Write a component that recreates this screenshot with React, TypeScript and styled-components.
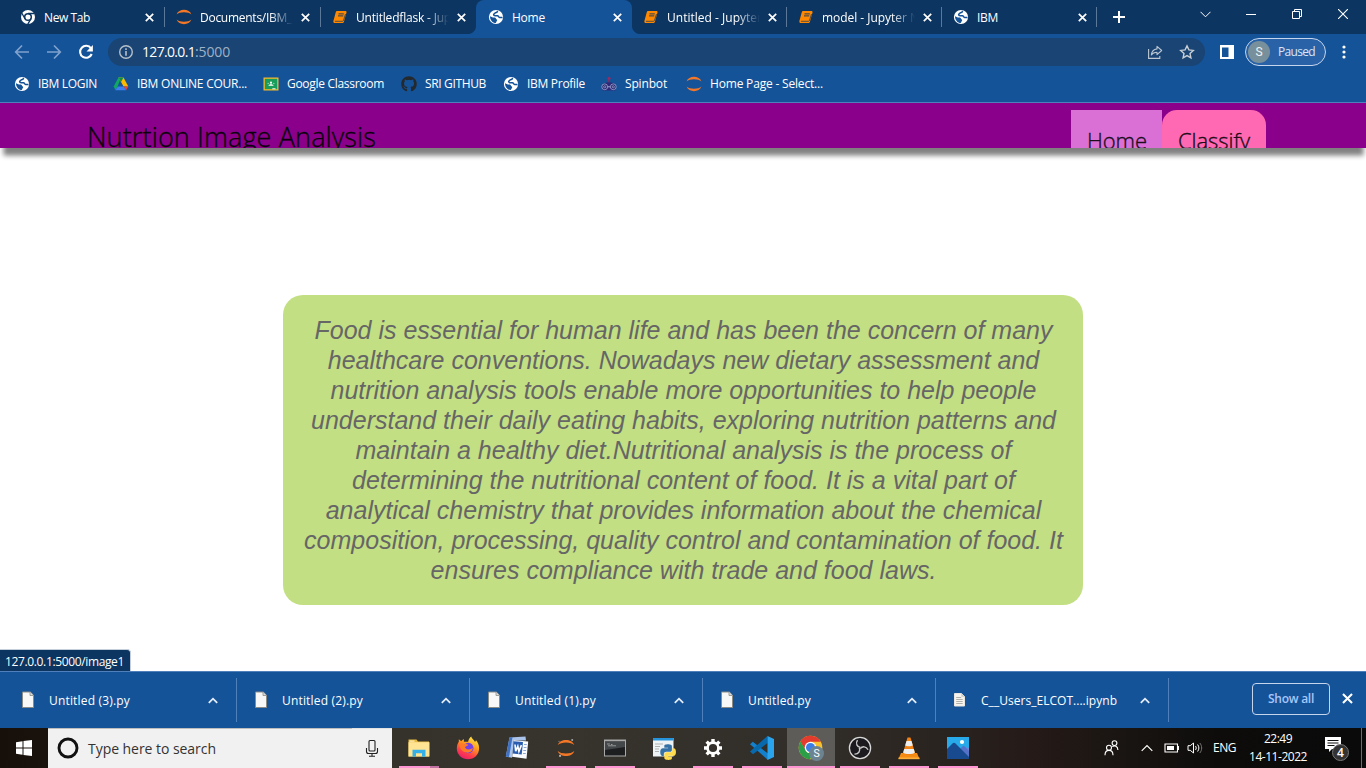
import React, { useLayoutEffect, useRef, useState } from 'react';
import styled, { createGlobalStyle, css } from 'styled-components';
import { FaGithub } from 'react-icons/fa';

const GlobalStyle = createGlobalStyle`
  * { box-sizing: border-box; }
  html, body { margin: 0; padding: 0; }
  body { background: #fff; overflow: hidden; }
`;

const ui = '"Open Sans", "Noto Sans", sans-serif';

/* ---------- text that is tracked to an exact width ---------- */

const TextSpan = styled.span<{ $size: number; $color: string; $weight: number }>`
  display: inline-block;
  flex: none;
  font-family: ${ui};
  font-size: ${p => p.$size}px;
  font-weight: ${p => p.$weight};
  color: ${p => p.$color};
  white-space: pre;
  ${p => p.$weight < 400 && css`-webkit-text-stroke: 0.35px ${p.$color};`}
`;

type FitProps = {
  children: React.ReactNode;
  width: number;
  size?: number;
  color?: string;
  weight?: number;
};

function Fit({ children, width, size = 12, color = '#fff', weight = 400 }: FitProps) {
  const ref = useRef<HTMLSpanElement>(null);
  const [tracking, setTracking] = useState(0);
  useLayoutEffect(() => {
    const el = ref.current;
    if (!el) return;
    const count = (el.textContent || '').length;
    el.style.letterSpacing = '0px';
    const next = (width - el.getBoundingClientRect().width) / count;
    el.style.letterSpacing = `${next}px`;
    setTracking(next);
  }, [width, size, weight]);
  return (
    <TextSpan ref={ref} $size={size} $color={color} $weight={weight} style={{ letterSpacing: tracking }}>
      {children}
    </TextSpan>
  );
}

/* ---------- frame ---------- */

const Screen = styled.div`
  width: 1366px;
  height: 768px;
  display: flex;
  flex-direction: column;
  overflow: hidden;
  background: #fff;
  font-family: ${ui};
  svg { display: block; flex: none; }
`;

/* ---------- tab strip ---------- */

const TabStrip = styled.div`
  height: 34px;
  flex: none;
  display: flex;
  padding-left: 8px;
  background: #0c3561;
`;

const TabBox = styled.div<{ $width: number; $active?: boolean; $divider?: boolean }>`
  position: relative;
  width: ${p => p.$width}px;
  height: 34px;
  flex: none;
  display: flex;
  align-items: center;
  padding: 0 0 0 12px;
  ${p => p.$active && css`
    margin-right: -1px;
    z-index: 1;
    background: #155399;
    border-radius: 8px 8px 0 0;
    &::before, &::after {
      content: '';
      position: absolute;
      bottom: 0;
      width: 8px;
      height: 8px;
    }
    &::before { left: -8px; background: radial-gradient(circle at 0 0, #0c3561 7.5px, #155399 8.5px); }
    &::after { right: -8px; background: radial-gradient(circle at 100% 0, #0c3561 7.5px, #155399 8.5px); }
  `}
  ${p => p.$divider && css`
    background: linear-gradient(#5b7898, #5b7898) 0 7px / 1px 20px no-repeat;
  `}
`;

const TabTitle = styled.div<{ $fade?: boolean }>`
  width: 93px;
  margin-left: 8px;
  overflow: hidden;
  line-height: 18px;
  ${p => p.$fade && css`
    mask-image: linear-gradient(90deg, #000 75%, transparent 100%);
  `}
`;

const TabClose = styled.div`
  width: 16px;
  margin-left: 4px;
  display: flex;
  justify-content: center;
`;

const NewTab = styled.div`
  width: 46px;
  display: flex;
  align-items: center;
  justify-content: center;
  background: linear-gradient(#5b7898, #5b7898) 0 7px / 1px 20px no-repeat;
`;

const WindowButtons = styled.div`
  margin-left: auto;
  height: 28px;
  display: flex;
`;

const WindowButton = styled.div`
  width: 46px;
  display: flex;
  align-items: center;
  justify-content: center;
`;

/* ---------- toolbar ---------- */

const Toolbar = styled.div`
  height: 36px;
  flex: none;
  display: flex;
  align-items: center;
  background: #155399;
`;

const NavButtons = styled.div`
  width: 108px;
  display: flex;
  gap: 16px;
  padding-left: 14px;
`;

const AddressBar = styled.div`
  width: 1097px;
  height: 28px;
  display: flex;
  align-items: center;
  padding: 0 10px;
  border-radius: 14px;
  background: #194473;
`;

const Url = styled.div`
  margin-left: 8px;
  flex: 1;
  display: flex;
  line-height: 20px;
`;

const AddressActions = styled.div`
  display: flex;
  gap: 16px;
`;

const SideButton = styled.div`
  width: 40px;
  display: flex;
  justify-content: center;
  padding-left: 3px;
`;

const ProfilePill = styled.div`
  width: 81px;
  height: 28px;
  display: flex;
  align-items: center;
  padding-left: 2px;
  border: 1px solid #c5d6ec;
  border-radius: 14px;
  background: #2a62a8;
  line-height: 18px;
`;

const Avatar = styled.div`
  width: 22px;
  height: 22px;
  margin-right: 8px;
  display: flex;
  align-items: center;
  justify-content: center;
  border-radius: 50%;
  background: #78909c;
  color: #eef2f4;
  font: 12px Roboto, sans-serif;
`;

const MenuButton = styled.div`
  width: 36px;
  display: flex;
  justify-content: center;
`;

const Bookmarks = styled.div`
  height: 33px;
  flex: none;
  display: flex;
  align-items: center;
  padding: 0 0 5px 14px;
  background: #155399;
  border-bottom: 1px solid #4f80bb;
`;

const Bookmark = styled.div<{ $width: number }>`
  width: ${p => p.$width}px;
  flex: none;
  display: flex;
  align-items: center;
  gap: 8px;
  line-height: 18px;
`;

/* ---------- page ---------- */

const Page = styled.main`
  position: relative;
  height: 568px;
  flex: none;
  background: #fff;
  overflow: hidden;
`;

const Header = styled.header`
  height: 45px;
  background: #8b008b;
  box-shadow: 0 10px 5px -2.5px #808080;
`;

const HeaderInner = styled.div`
  height: 45px;
  overflow: hidden;
  display: flex;
  justify-content: space-between;
  padding: 7px 100px 0 87px;
`;

const Brand = styled.div`
  padding-top: 8px;
  line-height: 38px;
`;

const Nav = styled.nav`
  display: flex;
`;

const NavLink = styled.div<{ $width: number; $tone: string; $round?: boolean }>`
  width: ${p => p.$width}px;
  height: 60px;
  padding: 15px 0 0 16px;
  line-height: 30px;
  background: ${p => p.$tone};
  border-radius: ${p => (p.$round ? '15px' : '0')};
`;

const Card = styled.section`
  width: 800px;
  height: 310px;
  margin: 147px auto 0;
  padding: 20px 19px 20px 20px;
  border-radius: 20px;
  background: #c3df83;
  color: #666;
  font: italic 25px/30px "Liberation Sans", Arial, sans-serif;
  text-align: center;
  white-space: nowrap;
`;

const StatusBubble = styled.div`
  position: absolute;
  left: 0;
  bottom: 0;
  width: 131px;
  height: 22px;
  padding-left: 5px;
  line-height: 20px;
  background: #0c3561;
  border-radius: 0 4px 0 0;
  border-top: 1px solid #c5cfdb;
  border-right: 1px solid #c5cfdb;
`;

/* ---------- downloads ---------- */

const Downloads = styled.div`
  height: 57px;
  flex: none;
  display: flex;
  align-items: center;
  background: #155399;
  border-top: 1px solid #4f80bb;
`;

const Download = styled.div<{ $first?: boolean }>`
  width: ${p => (p.$first ? 237 : 233)}px;
  height: 44px;
  display: flex;
  align-items: center;
  padding: 0 18px 0 ${p => (p.$first ? 20 : 16)}px;
  border-right: 1px solid #4f80bb;
  line-height: 18px;
`;

const DownloadName = styled.div`
  flex: 1;
  margin: -1px 0 0 13px;
`;

const DownloadEnd = styled.div`
  margin-left: auto;
  padding: 0 13px 3px 0;
  display: flex;
  align-items: center;
  gap: 12px;
`;

const ShowAll = styled.div`
  width: 78px;
  height: 32px;
  display: flex;
  align-items: center;
  justify-content: center;
  border: 1px solid #c5d6ec;
  border-radius: 4px;
`;

/* ---------- taskbar ---------- */

const Taskbar = styled.div`
  height: 40px;
  flex: none;
  display: flex;
  background: linear-gradient(90deg, #17100a 0, #1a130d 48px, #35322c 392px, #37342e 560px, #312d28 820px, #28221e 960px, #251a17 1030px, #1b1613 1110px, #0d0c0b 1220px, #0a0a0a 1366px);
`;

const StartButton = styled.div`
  width: 48px;
  display: flex;
  align-items: center;
  justify-content: center;
`;

const SearchBox = styled.div`
  width: 344px;
  display: flex;
  align-items: center;
  padding: 0 12px 0 9px;
  background: linear-gradient(90deg, #bdbdbd 304px, #e2e2e2 304px) 0 0 / 100% 1px no-repeat #f1f1f1;
`;

const SearchLabel = styled.div`
  flex: 1;
  margin-left: 9px;
  line-height: 22px;
`;

const Apps = styled.div`
  display: flex;
  gap: 1px;
  margin-left: 3px;
`;

const AppButton = styled.div<{ $line?: 'short' | 'full' | 'split' }>`
  width: 48px;
  height: 40px;
  display: flex;
  align-items: center;
  justify-content: center;
  ${p => p.$line === 'short' && css`
    background: linear-gradient(#ff94d3, #ff94d3) 4px 38px / 40px 2px no-repeat;
  `}
  ${p => p.$line === 'full' && css`
    background: linear-gradient(#ff94d3, #ff94d3) 0 38px / 48px 2px no-repeat #5e5c58;
  `}
  ${p => p.$line === 'split' && css`
    background: linear-gradient(90deg, #ff94d3 31px, #c272a2 31px) 4px 38px / 40px 2px no-repeat;
  `}
`;

const Tray = styled.div`
  margin-left: auto;
  display: flex;
  align-items: center;
`;

const TraySlot = styled.div<{ $width: number }>`
  width: ${p => p.$width}px;
  display: flex;
  align-items: center;
  justify-content: center;
  line-height: 18px;
`;

const Clock = styled.div`
  width: 66px;
  display: flex;
  flex-direction: column;
  align-items: center;
  line-height: 18px;
  margin: -1px 0 0 2px;
`;

const NoticeSlot = styled.div`
  width: 50px;
  display: flex;
  justify-content: center;
  padding: 4px 0 0 2px;
`;

const ShowDesktop = styled.div`
  width: 5px;
  height: 40px;
  border-left: 1px solid #6b6b6b;
`;

/* ---------- icons ---------- */

const Cross = ({ size = 9, w = 1.7 }: { size?: number; w?: number }) => (
  <svg width={size} height={size} viewBox="0 0 9 9"><path d="M.8.8l7.4 7.4M8.2.8L.8 8.2" stroke="#fff" strokeWidth={w} fill="none" /></svg>
);

const Globe = () => (
  <svg width="16" height="16" viewBox="0 0 16 16">
    <circle cx="8" cy="8" r="7.1" fill="#fff" />
    <path d="M9.6 1.900c-.2 1.500-.9 1.900-2.300 1.900-.5.900-1.700.7-1.700 1.800 0 .8.700 1.100 1.500 1.100h2.400c1.100.1 1 1.600 2 1.700h3" fill="none" stroke="#155399" strokeWidth="1.500" />
    <path d="M2 7.300l2.900 1.300h2c1.200.3.900 1.800 2.200 2.100.5 1-.8 1.500-1.300 3.400C4.500 14 2 11.200 2 7.300z" fill="#155399" />
  </svg>
);

const ChromeMono = () => (
  <svg width="16" height="16" viewBox="0 0 16 16">
    <circle cx="8" cy="8" r="7" fill="#fff" />
    <circle cx="8" cy="8" r="3.3" fill="#fff" stroke="#0c3561" strokeWidth="1.5" />
    <path d="M8 4.500h6.400M5 9.700L1.900 4.300M11 9.700L7.800 15.100" stroke="#0c3561" strokeWidth="1.300" />
  </svg>
);

const Jupyter = ({ size = 16, dots = false }: { size?: number; dots?: boolean }) => (
  <svg width={size} height={size} viewBox="0 0 16 16">
    <path d="M.6 5.400C2.500-.7 13.500-.7 15.400 5.400 12.500 2.400 3.500 2.400.6 5.400zM.6 10.600c1.900 6.100 12.900 6.100 14.800 0-2.900 3-11.900 3-14.800 0z" fill="#f37726" />
    {dots && <g fill="#aaa"><circle cx="13.500" cy="0.900" r=".9" /><circle cx="2.700" cy="15" r="1" /><circle cx="1.800" cy="2" r=".5" /></g>}
  </svg>
);

const Book = () => (
  <svg width="16" height="16" viewBox="0 0 16 16">
    <path d="M5.400 2h7.900c1 0 1.500.7 1.200 1.600l-2.600 9.100c-.2.800-.8 1.300-1.700 1.300H3c-1.300 0-1.900-.9-1.600-2.100L3.700 3.400C4 2.500 4.500 2 5.400 2z" fill="#ff8800" />
    <path d="M6.500 4.900h5.300M6 6.900h5.300" stroke="#0c3561" strokeWidth=".9" />
    <path d="M2.900 12.300h7.500c.6 0 .9-.3 1.100-.9L13.500 5" stroke="#0c3561" strokeWidth=".7" fill="none" />
  </svg>
);

const Arrow = ({ flip }: { flip?: boolean }) => (
  <svg width="16" height="16" viewBox="0 0 16 16">
    <path d={flip ? 'M1 8h13M8 1.500L14.300 8 8 14.500' : 'M15 8H2M8 1.500L1.700 8 8 14.500'} fill="none" stroke="#7fa2cd" strokeWidth="1.700" />
  </svg>
);

const Reload = () => (
  <svg width="16" height="16" viewBox="0 0 16 16">
    <path d="M13 4.300A6 6 0 1 0 13.700 10" fill="none" stroke="#fff" strokeWidth="2.100" />
    <path d="M14.900.9v6.500H8.500z" fill="#fff" />
  </svg>
);

const Info = () => (
  <svg width="16" height="16" viewBox="0 0 16 16">
    <circle cx="8" cy="8" r="6.300" fill="none" stroke="#b7c0ca" strokeWidth="1.400" />
    <path d="M8 7v4.800M8 4.200v1.700" stroke="#b7c0ca" strokeWidth="1.600" />
  </svg>
);

const Share = () => (
  <svg width="16" height="16" viewBox="0 0 16 16" fill="none" stroke="#bcc7d3" strokeWidth="1.100">
    <path d="M1.600 5v9.400h11.200V12" />
    <path d="M10 2.300l4.700 4.200L10 10.600V8.200c-2.800 0-4.500.8-5.700 2.800.4-3.400 2.300-5.700 5.700-6.100z" strokeLinejoin="round" />
  </svg>
);

const Star = () => (
  <svg width="16" height="16" viewBox="0 0 16 16">
    <path d="M8 1.900l1.900 4 4.400.5-3.300 3 .9 4.400L8 11.600l-3.900 2.200.9-4.400-3.300-3 4.400-.5z" fill="none" stroke="#c8cfd6" strokeWidth="1.400" />
  </svg>
);

const Drive = () => (
  <svg width="16" height="16" viewBox="0 0 16 16">
    <path d="M5.500 1.500h2.600L4.400 10.800 2.200 13.900.8 10.200z" fill="#11a861" />
    <path d="M5.500 1.500h5l4.800 8.900h-4.700z" fill="#ffba00" />
    <path d="M5.500 1.500h5L8 6z" fill="#0f8c4a" />
    <path d="M4.600 10.400h6.200l2.300 3.800H2.400z" fill="#3d7ff1" />
    <path d="M10.800 10.400h4.500l-2.200 3.800z" fill="#ea4335" />
  </svg>
);

const Classroom = () => (
  <svg width="16" height="16" viewBox="0 0 16 16">
    <path d="M.5 1.500h15v13H.5z" fill="#f6b92b" />
    <path d="M1.800 2.800h12.400v10.400H1.800z" fill="#189d5b" />
    <g fill="#fff"><circle cx="8" cy="6.700" r="1.100" /><path d="M5.500 9.700c0-2 5-2 5 0z" /></g>
    <g fill="#8bd1ab"><circle cx="5.200" cy="7.500" r=".8" /><circle cx="10.800" cy="7.500" r=".8" /></g>
    <path d="M9.300 12.300h3.200v1H9.300z" fill="#fff" />
  </svg>
);

const Spinbot = () => (
  <svg width="16" height="16" viewBox="0 0 16 16">
    <path d="M7.800 7V3.500" stroke="#8d2a62" strokeWidth="1" />
    <path d="M8 .5L9.800 2.200 8 4.700 6.300 2.600z" fill="#9c2a60" />
    <path d="M1.600 9C3 5.200 13 5.200 14.400 9v5.500H1.600z" fill="#2e2a78" />
    <g fill="#24256b" stroke="#a3a9d6" strokeWidth=".8"><circle cx="3.700" cy="10.800" r="2.900" /><circle cx="12.300" cy="10.800" r="2.900" /></g>
    <g fill="none" stroke="#9da2d0" strokeWidth=".8"><circle cx="3.700" cy="10.800" r="1.100" /><circle cx="12.300" cy="10.800" r="1.100" /></g>
    <path d="M6.700 10.800h2.600" stroke="#a3a9d6" strokeWidth="1" />
  </svg>
);

const FileIcon = () => (
  <svg width="16" height="18" viewBox="0 0 16 18">
    <path d="M2.500 1h7.800l3.200 3.200V16.500h-11z" fill="#f8f8f8" stroke="#8b8b86" strokeWidth="1" />
    <path d="M10 1v3.500h3.500" fill="#ddd" stroke="#8b8b86" strokeWidth=".8" />
  </svg>
);

const NotebookFile = () => (
  <svg width="16" height="18" viewBox="0 0 16 18">
    <path d="M2.500 2.500h7l3 3v9.500h-10z" fill="#f5f4ef" stroke="#e8e6df" />
    <path d="M9.300 2.300v3.400h3.400" fill="#cfcdc4" />
    <path d="M4.200 6.500h5M4.200 8.500h6.500M4.200 10.500h6.500M4.200 12.500h6.500" stroke="#aaa9a0" strokeWidth=".9" />
  </svg>
);

const ChevronUp = () => (
  <svg width="10" height="7" viewBox="0 0 10 7"><path d="M.8 5.900L5 1.700l4.200 4.200" fill="none" stroke="#e4edf8" strokeWidth="1.800" /></svg>
);

const Explorer = () => (
  <svg width="24" height="24" viewBox="0 0 24 24">
    <path d="M1.500 3.500h8l1.500 2h11v15h-20.500z" fill="#e8b93f" />
    <path d="M1.500 6.200h21v14.300h-21z" fill="#ffe493" />
    <path d="M2.500 4.500h5v1.200h-5z" fill="#fff3c2" />
    <path d="M5.500 20.800v-7h13v7h-3.500v-3.500H9v3.500z" fill="#36b0e8" />
  </svg>
);

const Firefox = () => (
  <svg width="24" height="24" viewBox="0 0 24 24">
    <defs>
      <linearGradient id="ff" x1=".8" y1="0" x2=".3" y2="1"><stop offset="0" stopColor="#fff04a" /><stop offset=".4" stopColor="#ff9a1f" /><stop offset=".75" stopColor="#ff3b4b" /><stop offset="1" stopColor="#e5206f" /></linearGradient>
    </defs>
    <path d="M15.200.5c.4 2.400 3 3.200 3.700 5.300 1-.4 1-1.200 1-1.800 2.200 2.400 3.200 5.400 3.200 8.200 0 6.500-5 11-11.100 11S.8 18.500.8 12.400c0-3 1-5.200 2-6.700V3.300l2.500 2c.7-.9 1.500-1.700 2.600-2v2.500h4.200c.4-2.200 1.500-4 3.100-5.300z" fill="url(#ff)" />
    <circle cx="12.300" cy="12" r="5.200" fill="#7542e5" />
    <path d="M3.500 8c2-1.200 3.500-.6 4.600.5 1.500-.8 3.300-.5 4.300.3-.6 1.300-3 1-3.300 2.800 1 2.500 5.300 2.500 7.800.2-.6 4-3.600 5.300-6.600 4.700C6 15.800 3.700 12.500 3.500 8z" fill="#ff7b28" />
  </svg>
);

const Word = () => (
  <svg width="24" height="24" viewBox="0 0 24 24">
    <path d="M4.500 1.500L20.500.6l.5 4H9L7 21.800.8 20.500z" fill="#a9c3ea" />
    <path d="M4.500 1.500L7.500 1.300 4 21l-3.200-.5z" fill="#3f72c2" />
    <path d="M9 4.200l14.200 1.300-1.700 17.300L7.200 20.800z" fill="#f9fbff" />
    <path d="M8.500 5.200l9.500.9-1.300 12.500-9-1.100z" fill="#2a5db0" />
    <path d="M10 8.500l.7 6.700 2.100-5 1.100 5.300 2.500-6.400" fill="none" stroke="#fff" strokeWidth="1.600" />
    <path d="M19 8.500h2.800M18.700 11.500h2.800M18.300 14.500h2.800M18 17.500h2.800" stroke="#8da6d2" strokeWidth="1" />
  </svg>
);

const Terminal = () => (
  <svg width="24" height="24" viewBox="0 0 24 24">
    <path d="M1 3.500h22v17H1z" fill="#a9a9a9" />
    <path d="M2 5.500h20v14H2z" fill="#1d1e20" />
    <path d="M2 5.500h20v5.500L2 14z" fill="#44474a" />
    <path d="M4 8h2.800M8 8.500h1.500M5 9.800h8" stroke="#ababab" strokeWidth=".8" />
  </svg>
);

const snake = 'M14.25.18l.9.2.73.26.59.3.45.32.34.34.25.34.16.33.1.3.04.26.02.2-.01.13V8.5l-.05.63-.13.55-.21.46-.26.38-.3.31-.33.25-.35.19-.35.14-.33.1-.3.07-.26.04-.21.02H8.77l-.69.05-.59.14-.5.22-.41.27-.33.32-.27.35-.2.36-.15.37-.1.35-.07.32-.04.27-.02.21v3.06H3.17l-.21-.03-.28-.07-.32-.12-.35-.18-.36-.26-.36-.36-.35-.46-.32-.59-.28-.73-.21-.88-.14-1.05-.05-1.23.06-1.22.16-1.04.24-.87.32-.71.36-.57.4-.44.42-.33.42-.24.4-.16.36-.1.32-.05.24-.01h.16l.06.01h8.16v-.83H6.18l-.01-2.75-.02-.37.05-.34.11-.31.17-.28.25-.26.31-.23.38-.2.44-.18.51-.15.58-.12.64-.1.71-.06.77-.04.84-.02 1.27.05z';

const PythonIdle = () => (
  <svg width="24" height="24" viewBox="0 0 24 24">
    <path d="M1 2h20.500v18.500H1z" fill="#eef3f5" /><path d="M1 2h20.500v2.500H1z" fill="#2793da" />
    <path d="M3 8h8M3 10.500h5M3 13h4M3 15.500h4" stroke="#b1b1b1" />
    <g transform="translate(8.300 8.300) scale(.65)">
      <path d={snake} fill="#3571a5" />
      <path d={snake} fill="#ffdc4e" transform="rotate(180 12 12)" />
    </g>
  </svg>
);

const Gear = () => (
  <svg width="20" height="20" viewBox="0 0 20 20">
    <g stroke="#fff" strokeWidth="3.400">
      {[0, 45, 90, 135].map(a => <path key={a} d="M10 1v3.500M10 15.500v3.500" transform={`rotate(${a} 10 10)`} />)}
    </g>
    <circle cx="10" cy="10" r="5.400" fill="none" stroke="#fff" strokeWidth="2.600" />
  </svg>
);

const VsCode = () => (
  <svg width="24" height="24" viewBox="0 0 24 24">
    <path d="M0 8.300L2.800 5.800 18 17.500V24L1.500 9.500z" fill="#1480cc" />
    <path d="M0 15.500L17.500 0v7L3 18.300z" fill="#0869ac" />
    <path d="M17.500 0L24 3v18l-6.500 3z" fill="#2ba4ee" />
  </svg>
);

const ChromeApp = () => (
  <svg width="26" height="26" viewBox="0 0 26 26">
    <circle cx="12.500" cy="12.500" r="11.800" fill="#fbc02d" />
    <path d="M2.300 6.600A11.800 11.800 0 0 1 22.800 6.800H12.500L7.500 15.500z" fill="#e33b2e" />
    <path d="M2.300 6.600A11.800 11.800 0 0 0 12 24.300L17.300 15.500 12.500 18H9.500z" fill="#2b9e48" />
    <circle cx="12.500" cy="12.500" r="5.800" fill="#fff" /><circle cx="12.500" cy="12.500" r="4.500" fill="#3c7de6" />
    <circle cx="18.500" cy="18.500" r="7.500" fill="#6c8492" />
    <text x="18.500" y="22.200" textAnchor="middle" fontFamily="Roboto, sans-serif" fontSize="10.500" fill="#fff">S</text>
  </svg>
);

const Obs = () => (
  <svg width="24" height="24" viewBox="0 0 24 24">
    <circle cx="12" cy="12" r="10.600" fill="#1c1a1e" stroke="#d9d9d9" strokeWidth="1.300" />
    <g fill="none" stroke="#c9c9c9" strokeWidth="1.400">
      {[0, 120, 240].map(a => <path key={a} d="M12.500 11.500C9 11 7.300 7.500 9.500 4.200" transform={`rotate(${a} 12 12)`} />)}
    </g>
  </svg>
);

const Vlc = () => (
  <svg width="24" height="24" viewBox="0 0 24 24">
    <path d="M4 17h16l2.500 6h-21z" fill="#f68b14" /><path d="M1.500 21.500h21V23.200h-21z" fill="#ffae38" />
    <path d="M10.500 1.500h3L18 17c-1 2.800-11 2.800-12 0z" fill="#f18314" />
    <path d="M9.500 5h5l1.300 4.500c-1.500 1-6.200 1-7.600 0zM7.200 13h9.600l1 3.500c-1.500 2-10 2-11.600 0z" fill="#eceef0" />
  </svg>
);

const Photos = () => (
  <svg width="22" height="22" viewBox="0 0 22 22">
    <path d="M0 0h22v22H0z" fill="#28aaea" />
    <path d="M22 11v11H11l-1-5 6.500-7z" fill="#6f83d6" />
    <path d="M12 13l3.500-3.500c.8-.7 1.500-.7 2.300 0L22 14v8z" fill="#5572c8" />
    <path d="M0 12l5.500-5.500c1-1 2-1 3 0L22 20v2H0z" fill="#174a8e" />
    <circle cx="15" cy="5" r="2.100" fill="#fff" />
  </svg>
);

const People = () => (
  <svg width="15" height="16" viewBox="0 0 15 16" fill="none" stroke="#fff" strokeWidth="1.100">
    <circle cx="5" cy="7.800" r="2.500" /><path d="M1 15.200c0-6.500 8-6.500 8 0" />
    <circle cx="10.500" cy="3.100" r="2.400" /><path d="M8.300 6.600c2.500-1.700 5.500-.2 5.600 3.300" />
  </svg>
);

const Battery = () => (
  <svg width="16" height="10" viewBox="0 0 16 10"><path d="M1 1h12.500v8H1z" fill="none" stroke="#fff" strokeWidth="1.100" /><path d="M3 3h7v4H3z" fill="#fff" /><path d="M14.500 3v4" stroke="#fff" /></svg>
);

const Speaker = () => (
  <svg width="16" height="14" viewBox="0 0 16 14" fill="none" stroke="#fff">
    <path d="M1 4.700h2.200L6.500 2v10L3.200 9.300H1z" /><path d="M8.500 5c.9 1.300.9 2.700 0 4M10.600 3.500c1.700 2.200 1.700 4.800 0 7" /><path d="M12.800 2c2.500 3 2.500 7 0 10" stroke="#777" />
  </svg>
);

const Notice = () => (
  <svg width="24" height="26" viewBox="0 0 24 26">
    <path d="M0 0h16v12H7l-3 3v-3H0z" fill="#fff" />
    <path d="M2.500 3.500h11M2.500 6h11M2.500 8.500h7" stroke="#111" strokeWidth="1" />
    <circle cx="15.500" cy="15.500" r="8" fill="#333" stroke="#777" strokeWidth="1" />
    <text x="15.500" y="19.800" textAnchor="middle" fontFamily="Open Sans, sans-serif" fontSize="12" fontWeight="600" fill="#fff">4</text>
  </svg>
);

/* ---------- data ---------- */

const tabs = [
  { title: 'New Tab', w: 46, icon: <ChromeMono />, width: 156 },
  { title: 'Documents/IBM_P', w: 99, icon: <Jupyter />, width: 156, fade: true, divider: true },
  { title: 'Untitledflask - Jup', w: 95, icon: <Book />, width: 156, fade: true, divider: true },
  { title: 'Home', w: 33, icon: <Globe />, width: 156, active: true },
  { title: 'Untitled - Jupyter', w: 95, icon: <Book />, width: 155, fade: true },
  { title: 'model - Jupyter N', w: 97, icon: <Book />, width: 155, fade: true, divider: true },
  { title: 'IBM', w: 21, icon: <Globe />, width: 155, divider: true },
];

const bookmarks = [
  { name: 'IBM LOGIN', w: 59, icon: <Globe />, width: 99 },
  { name: 'IBM ONLINE COUR...', w: 110, icon: <Drive />, width: 150 },
  { name: 'Google Classroom', w: 97, icon: <Classroom />, width: 138 },
  { name: 'SRI GITHUB', w: 61, icon: <FaGithub size={16} color="#24292e" />, width: 102 },
  { name: 'IBM Profile', w: 58, icon: <Globe />, width: 98 },
  { name: 'Spinbot', w: 42, icon: <Spinbot />, width: 85 },
  { name: 'Home Page - Select...', w: 113, icon: <Jupyter />, width: 140 },
];

const downloads = [
  { name: 'Untitled (3).py', w: 81 },
  { name: 'Untitled (2).py', w: 81 },
  { name: 'Untitled (1).py', w: 81 },
  { name: 'Untitled.py', w: 63 },
  { name: 'C__Users_ELCOT....ipynb', w: 136, notebook: true },
];

const lines = [
  'Food is essential for human life and has been the concern of many',
  'healthcare conventions. Nowadays new dietary assessment and',
  'nutrition analysis tools enable more opportunities to help people',
  'understand their daily eating habits, exploring nutrition patterns and',
  'maintain a healthy diet.Nutritional analysis is the process of',
  'determining the nutritional content of food. It is a vital part of',
  'analytical chemistry that provides information about the chemical',
  'composition, processing, quality control and contamination of food. It',
  'ensures compliance with trade and food laws.',
];

export default function App() {
  return (
    <Screen>
      <GlobalStyle />
      <TabStrip>
        {tabs.map((t, i) => (
          <TabBox key={i} $width={t.width} $active={t.active} $divider={t.divider}>
            {t.icon}
            <TabTitle $fade={t.fade}><Fit width={t.w}>{t.title}</Fit></TabTitle>
            <TabClose><Cross /></TabClose>
          </TabBox>
        ))}
        <NewTab><svg width="12" height="12" viewBox="0 0 12 12"><path d="M6 0v12M0 6h12" stroke="#fff" strokeWidth="2" /></svg></NewTab>
        <WindowButtons>
          <WindowButton><svg width="11" height="7" viewBox="0 0 11 7"><path d="M.5 .8l5 5 5-5" fill="none" stroke="#fff" /></svg></WindowButton>
          <WindowButton><svg width="10" height="1"><path d="M0 .5h10" stroke="#fff" /></svg></WindowButton>
          <WindowButton><svg width="10" height="10" viewBox="0 0 10 10"><path d="M.5 2.500h7v7h-7zM2.500 2.500v-2h7v7h-2" fill="none" stroke="#fff" /></svg></WindowButton>
          <WindowButton><svg width="10" height="10" viewBox="0 0 10 10"><path d="M0 0l10 10M10 0L0 10" stroke="#fff" strokeWidth="1.100" /></svg></WindowButton>
        </WindowButtons>
      </TabStrip>

      <Toolbar>
        <NavButtons><Arrow /><Arrow flip /><Reload /></NavButtons>
        <AddressBar>
          <Info />
          <Url>
            <Fit width={53} size={14}>127.0.0.1</Fit>
            <Fit width={35} size={14} color="#9fb1c6">:5000</Fit>
          </Url>
          <AddressActions><Share /><Star /></AddressActions>
        </AddressBar>
        <SideButton><svg width="14" height="14" viewBox="0 0 14 14"><path d="M0 0h14v14H0zM2 2.500v9.500h6.500V2.500z" fill="#fff" fillRule="evenodd" /></svg></SideButton>
        <ProfilePill>
          <Avatar>S</Avatar>
          <Fit width={37} color="#d9e6f7">Paused</Fit>
        </ProfilePill>
        <MenuButton><svg width="4" height="14" viewBox="0 0 4 14" fill="#fff"><circle cx="2" cy="2" r="1.600" /><circle cx="2" cy="7" r="1.600" /><circle cx="2" cy="12" r="1.600" /></svg></MenuButton>
      </Toolbar>
      <Bookmarks>
        {bookmarks.map(b => (
          <Bookmark key={b.name} $width={b.width}>{b.icon}<Fit width={b.w}>{b.name}</Fit></Bookmark>
        ))}
      </Bookmarks>

      <Page>
        <Header>
          <HeaderInner>
            <Brand><Fit width={289} size={27} color="#0b000b" weight={300}>Nutrtion Image Analysis</Fit></Brand>
            <Nav>
              <NavLink $width={91} $tone="#da70d6"><Fit width={60} size={22} color="#1c0e1b" weight={300}>Home</Fit></NavLink>
              <NavLink $width={104} $tone="#ff69b4" $round><Fit width={72} size={22} color="#200d17" weight={300}>Classify</Fit></NavLink>
            </Nav>
          </HeaderInner>
        </Header>
        <Card>{lines.map(l => <div key={l}>{l}</div>)}</Card>
        <StatusBubble><Fit width={119}>127.0.0.1:5000/image1</Fit></StatusBubble>
      </Page>

      <Downloads>
        {downloads.map((d, i) => (
          <Download key={d.name} $first={i === 0}>
            {d.notebook ? <NotebookFile /> : <FileIcon />}
            <DownloadName><Fit width={d.w}>{d.name}</Fit></DownloadName>
            <ChevronUp />
          </Download>
        ))}
        <DownloadEnd>
          <ShowAll><Fit width={46} color="#a8c7fa" weight={600}>Show all</Fit></ShowAll>
          <Cross size={11} w={1.700} />
        </DownloadEnd>
      </Downloads>

      <Taskbar>
        <StartButton>
          <svg width="16" height="16" viewBox="0 0 16 16" fill="#fff"><path d="M0 2.200L6.500 1.300v6.200H0zM7.500 1.100L16 0v7.500H7.500zM0 8.500h6.500v6.200L0 13.800zM7.500 8.500H16V16l-8.500-1.100z" /></svg>
        </StartButton>
        <SearchBox>
          <svg width="22" height="22" viewBox="0 0 22 22"><circle cx="11" cy="11" r="9" fill="none" stroke="#111" strokeWidth="2.900" /></svg>
          <SearchLabel><Fit width={128} size={14} color="#333">Type here to search</Fit></SearchLabel>
          <svg width="16" height="18" viewBox="0 0 16 18" fill="none" stroke="#222" strokeWidth="1.100"><rect x="5" y="1.500" width="6" height="10.500" rx="1" /><path d="M2.500 9v3.500c0 1 .8 2 2 2h7c1.200 0 2-1 2-2V9M8 14.500v2.500M5 17.200h6" /></svg>
        </SearchBox>
        <Apps>
          <AppButton $line="split"><Explorer /></AppButton>
          <AppButton><Firefox /></AppButton>
          <AppButton><Word /></AppButton>
          <AppButton $line="short"><Jupyter size={18} dots /></AppButton>
          <AppButton $line="short"><Terminal /></AppButton>
          <AppButton><PythonIdle /></AppButton>
          <AppButton $line="short"><Gear /></AppButton>
          <AppButton $line="short"><VsCode /></AppButton>
          <AppButton $line="full"><ChromeApp /></AppButton>
          <AppButton $line="short"><Obs /></AppButton>
          <AppButton $line="short"><Vlc /></AppButton>
          <AppButton $line="short"><Photos /></AppButton>
        </Apps>
        <Tray>
          <TraySlot $width={48}><People /></TraySlot>
          <TraySlot $width={24}><svg width="12" height="8" viewBox="0 0 12 8"><path d="M.7 6.800L6 1.500l5.300 5.300" fill="none" stroke="#fff" strokeWidth="1.200" /></svg></TraySlot>
          <TraySlot $width={25}><Battery /></TraySlot>
          <TraySlot $width={22}><Speaker /></TraySlot>
          <TraySlot $width={37}><Fit width={23}>ENG</Fit></TraySlot>
          <Clock><Fit width={28}>22:49</Fit><Fit width={58}>14-11-2022</Fit></Clock>
          <NoticeSlot><Notice /></NoticeSlot>
          <ShowDesktop />
        </Tray>
      </Taskbar>
    </Screen>
  );
}
